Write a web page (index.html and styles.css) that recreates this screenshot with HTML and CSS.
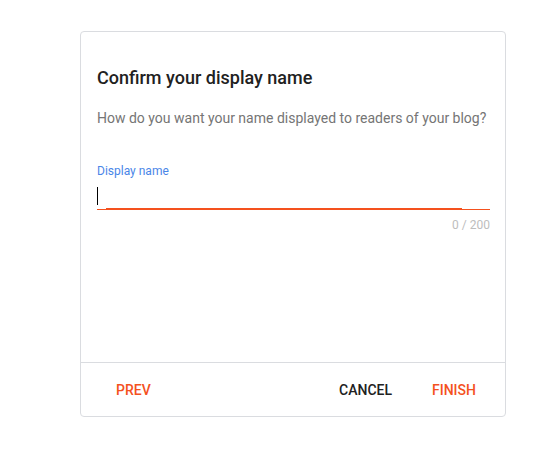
FILE: index.html
```html
<!DOCTYPE html>
<html lang="en">
<head>
    <meta charset="UTF-8">
    <meta name="viewport" content="width=device-width, initial-scale=1.0">
    <title>Confirm your display name</title>
    <link rel="stylesheet" href="styles.css">
</head>
<body>
    <main class="dialog">
        <section class="dialog-content">
            <h1>Confirm your display name</h1>
            <p class="subtitle">How do you want your name displayed to readers of your blog?</p>

            <div class="field">
                <label class="field-label">Display name</label>
                <div class="field-input">
                    <span class="caret"></span>
                </div>
                <div class="field-counter">0 / 200</div>
            </div>
        </section>

        <footer class="dialog-actions">
            <button class="btn btn-accent">Prev</button>
            <div class="actions-right">
                <button class="btn btn-dark">Cancel</button>
                <button class="btn btn-accent">Finish</button>
            </div>
        </footer>
    </main>
</body>
</html>
```

FILE: styles.css
```css
body {
    margin: 0;
    background: #ffffff;
    font-family: Roboto, "Liberation Sans", sans-serif;
}

.dialog {
    box-sizing: border-box;
    width: 426px;
    height: 386px;
    margin: 31px 0 0 80px;
    border: 1px solid #dadce0;
    border-radius: 4px;
    display: flex;
    flex-direction: column;
}

.dialog-content {
    flex: 1;
    padding: 34px 15px 0 16px;
}

h1 {
    margin: 0;
    font-size: 18px;
    font-weight: 500;
    line-height: 24px;
    color: #212121;
}

.subtitle {
    margin: 18px 0 0;
    font-size: 14px;
    line-height: 20px;
    color: #757575;
}

.field {
    margin-top: 35px;
}

.field-label {
    display: block;
    font-size: 12px;
    line-height: 16px;
    color: #4a86e8;
}

.field-input {
    position: relative;
    height: 31px;
    box-sizing: border-box;
    padding-top: 8px;
    border-bottom: 1px solid #f4511e;
}

/* focus ripple, still spreading */
.field-input::after {
    content: '';
    position: absolute;
    left: 9px;
    right: 28px;
    bottom: -1px;
    height: 2px;
    background: #f4511e;
}

.caret {
    display: block;
    width: 1px;
    height: 18px;
    background: #000000;
}

.field-counter {
    margin-top: 8px;
    text-align: right;
    font-size: 12px;
    line-height: 14px;
    color: #bdbdbd;
}

.dialog-actions {
    height: 53px;
    border-top: 1px solid #dadce0;
    display: flex;
    align-items: center;
    justify-content: space-between;
    padding: 0 13px 0 19px;
}

.actions-right {
    display: flex;
    gap: 8px;
}

.btn {
    background: none;
    border: none;
    padding: 0 16px;
    height: 36px;
    font-family: Roboto, "Liberation Sans", sans-serif;
    font-size: 14px;
    font-weight: 500;
    text-transform: uppercase;
    cursor: pointer;
}

.btn-accent {
    color: #f4511e;
}

.btn-dark {
    color: #212121;
}
```
